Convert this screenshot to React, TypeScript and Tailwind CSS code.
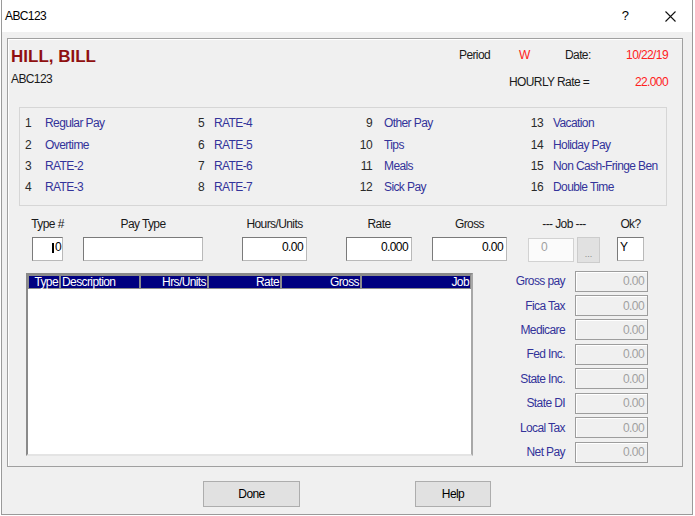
import React from 'react';

type Code = [string, string];

const codeColumns: { items: Code[]; width: string; num: string; label: string }[] = [
  {
    items: [['1', 'Regular Pay'], ['2', 'Overtime'], ['3', 'RATE-2'], ['4', 'RATE-3']],
    width: 'w-[173px]',
    num: 'w-[20px] text-left',
    label: '',
  },
  {
    items: [['5', 'RATE-4'], ['6', 'RATE-5'], ['7', 'RATE-6'], ['8', 'RATE-7']],
    width: 'w-[152px]',
    num: 'w-[16px] text-left',
    label: '',
  },
  {
    items: [['9', 'Other Pay'], ['10', 'Tips'], ['11', 'Meals'], ['12', 'Sick Pay']],
    width: 'w-[170px]',
    num: 'w-[22px] text-right',
    label: 'ml-[12px]',
  },
  {
    items: [['13', 'Vacation'], ['14', 'Holiday Pay'], ['15', 'Non Cash-Fringe Ben'], ['16', 'Double Time']],
    width: 'flex-1',
    num: 'w-[23px] text-right',
    label: 'ml-[10px]',
  },
];

const rowHeights = ['h-[22px]', 'h-[22px]', 'h-[21px]', 'h-[20px]'];

const tableCols = [
  { name: 'Type', w: 'w-[32px]', align: 'justify-end' },
  { name: 'Description', w: 'w-[80px]', align: 'justify-start' },
  { name: 'Hrs/Units', w: 'w-[68px]', align: 'justify-end' },
  { name: 'Rate', w: 'w-[73px]', align: 'justify-end' },
  { name: 'Gross', w: 'w-[80px]', align: 'justify-end' },
  { name: 'Job', w: 'w-[110px]', align: 'justify-end' },
];

const totals = ['Gross pay', 'Fica Tax', 'Medicare', 'Fed Inc.', 'State Inc.', 'State DI', 'Local Tax', 'Net Pay'];

function Field({ value, width, align = 'right' }: { value: string; width: string; align?: 'left' | 'right' }) {
  return (
    <div
      className={`${width} h-[24px] bg-white border border-[#7a7a7a] border-b-[#b9b9b9] border-r-[#b9b9b9] flex items-start pt-[2px] leading-[14px] text-black ${
        align === 'right' ? 'justify-end pr-[3px]' : 'justify-start pl-[2px]'
      }`}
    >
      {value}
    </div>
  );
}

function Column({ label, children, className }: { label: string; children: React.ReactNode; className: string }) {
  return (
    <div className={`flex flex-col items-center ${className}`}>
      <div className="h-[14px] leading-[14px] text-[#1a1a1a] whitespace-nowrap">{label}</div>
      <div className="mt-[6px]">{children}</div>
    </div>
  );
}

export default function App() {
  return (
    <div className="w-[695px] h-[516px] bg-white overflow-hidden font-['Liberation_Sans',Arial,sans-serif] text-[12px] tracking-[-0.6px]">
      <div className="ml-[1px] w-[692px] h-[515px] border-x border-b border-[#9a9a9a] flex flex-col">
        {/* title bar */}
        <div className="h-[32px] bg-white flex items-center pl-[3px] text-black">
          <span>ABC123</span>
          <span className="ml-auto text-[13px] tracking-normal mr-[36px]">?</span>
          <svg width="11" height="11" viewBox="0 0 11 11" className="mr-[16px]">
            <path d="M0.5 0.5 L10.5 10.5 M10.5 0.5 L0.5 10.5" stroke="#111" strokeWidth="1.1" />
          </svg>
        </div>

        {/* body */}
        <div className="flex-1 bg-[#f0f0f0] pt-[6px] pl-[5px]">
          <div className="w-[676px] h-[429px] border border-[#a0a0a0] shadow-[inset_1px_1px_0_#ffffff] flex flex-col">
            {/* header */}
            <div className="h-[68px] flex">
              <div className="pl-[3px] pt-[9px]">
                <div className="h-[17px] leading-[17px] text-[17px] font-bold tracking-normal text-[#8f1010]">HILL, BILL</div>
                <div className="mt-[7px] h-[14px] leading-[14px] text-[#1a1a1a]">ABC123</div>
              </div>
              <div className="ml-auto mr-[14px] w-[209px] pt-[9px] text-[#1a1a1a]">
                <div className="flex h-[14px] leading-[14px]">
                  <span className="w-[60px]">Period</span>
                  <span className="w-[46px] text-[#ff2020]">W</span>
                  <span>Date:</span>
                  <span className="ml-auto text-[#ff2020]">10/22/19</span>
                </div>
                <div className="flex h-[14px] leading-[14px] mt-[13px] pl-[50px]">
                  <span>HOURLY Rate =</span>
                  <span className="ml-auto text-[#ff2020]">22.000</span>
                </div>
              </div>
            </div>

            {/* pay codes */}
            <div className="ml-[11px] w-[648px] h-[99px] border border-[#d6d6d6] pl-[5px] pt-[4px] flex">
              {codeColumns.map((col, ci) => (
                <div key={ci} className={`${col.width} flex flex-col`}>
                  {col.items.map(([n, label], ri) => (
                    <div key={n} className={`${rowHeights[ri]} flex items-center whitespace-nowrap`}>
                      <span className={`${col.num} text-[#2a2a2a]`}>{n}</span>
                      <span className={`${col.label} text-[#33339a]`}>{label}</span>
                    </div>
                  ))}
                </div>
              ))}
            </div>

            {/* entry row */}
            <div className="mt-[11px] flex items-start">
              <Column label="Type #" className="ml-[24px] w-[31px]">
                <div className="w-[31px] h-[24px] bg-white border border-[#7a7a7a] border-b-[#b9b9b9] border-r-[#b9b9b9] flex items-start justify-end pr-[1px] pt-[2px] leading-[14px] text-black">
                  <span className="w-[2px] h-[10px] mt-[3px] bg-black mr-[1px]" />
                  <span>0</span>
                </div>
              </Column>
              <Column label="Pay Type" className="ml-[20px] w-[120px]">
                <Field value="" width="w-[120px]" />
              </Column>
              <Column label="Hours/Units" className="ml-[39px] w-[65px]">
                <Field value="0.00" width="w-[65px]" />
              </Column>
              <Column label="Rate" className="ml-[39px] w-[66px]">
                <Field value="0.000" width="w-[66px]" />
              </Column>
              <Column label="Gross" className="ml-[20px] w-[75px]">
                <Field value="0.00" width="w-[75px]" />
              </Column>
              <Column label="--- Job ---" className="ml-[21px] w-[72px]">
                <div className="flex items-center">
                  <div className="w-[46px] h-[24px] bg-[#fbfbfb] border border-[#d2d2d2] pl-[12px] pt-[1px] leading-[14px] text-[#a0a0a0]">0</div>
                  <div className="ml-[3px] w-[23px] h-[26px] bg-[#e1e1e1] border border-[#cccccc] flex items-end justify-center pb-[3px] text-[9px] leading-[9px] text-[#8a8a8a] tracking-normal">
                    ...
                  </div>
                </div>
              </Column>
              <Column label="Ok?" className="ml-[17px] w-[27px]">
                <Field value="Y" width="w-[27px]" align="left" />
              </Column>
            </div>

            {/* list + totals */}
            <div className="mt-[8px] flex items-start">
              <div className="ml-[18px] mt-[2px] w-[447px] h-[183px] bg-white border-2 border-[#8a8a8a] border-b-[#e4e4e4] border-r-[#a8a8a8] flex flex-col">
                <div className="flex h-[14px]">
                  {tableCols.map((c) => (
                    <div
                      key={c.name}
                      className={`${c.w} h-[14px] bg-[#000080] border border-[#8c8c8c] flex items-center ${c.align} px-[1px] text-white leading-[12px]`}
                    >
                      {c.name}
                    </div>
                  ))}
                </div>
              </div>

              <div className="flex flex-col">
                {totals.map((t) => (
                  <div key={t} className="h-[24.43px] flex items-start">
                    <div className="w-[92px] h-[21px] flex items-center justify-end text-[#33339a] whitespace-nowrap">{t}</div>
                    <div className="ml-[10px] w-[73px] h-[21px] border border-[#9d9d9d] shadow-[inset_1px_1px_0_#ffffff] flex items-center justify-end pr-[3px] text-[#a0a0a0]">
                      0.00
                    </div>
                  </div>
                ))}
              </div>
            </div>
          </div>

          {/* buttons */}
          <div className="mt-[14px] flex">
            <button className="ml-[196px] w-[97px] h-[26px] bg-[#e1e1e1] border border-[#adadad] text-black">Done</button>
            <button className="ml-[115px] w-[76px] h-[26px] bg-[#e1e1e1] border border-[#adadad] text-black">Help</button>
          </div>
        </div>
      </div>
    </div>
  );
}
